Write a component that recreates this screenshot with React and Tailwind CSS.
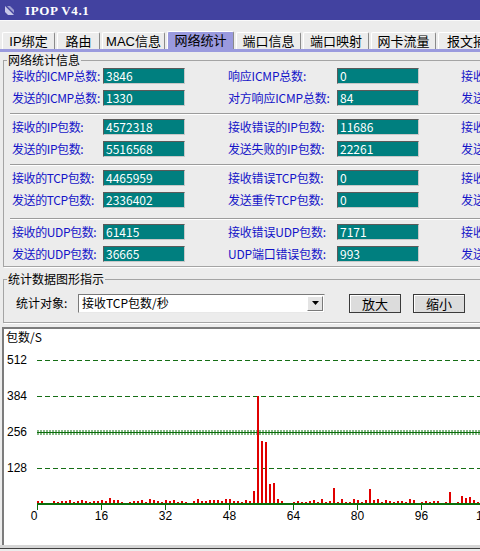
import React from "react";

const tabs = [
  ["IP绑定", 53],
  ["路由", 43],
  ["MAC信息", 63],
  ["网络统计", 67, true],
  ["端口信息", 65],
  ["端口映射", 66],
  ["网卡流量", 65],
  ["报文捕获", 70],
];

// 每组两行：[标签, 值, 中间标签, 值, 右侧标签]
const blocks = [
  [
    ["接收的ICMP总数:", "3846", "响应ICMP总数:", "0", "接收的ICMP错误:"],
    ["发送的ICMP总数:", "1330", "对方响应ICMP总数:", "84", "发送的ICMP错误:"],
  ],
  [
    ["接收的IP包数:", "4572318", "接收错误的IP包数:", "11686", "接收的IP分片:"],
    ["发送的IP包数:", "5516568", "发送失败的IP包数:", "22261", "发送的IP分片:"],
  ],
  [
    ["接收的TCP包数:", "4465959", "接收错误TCP包数:", "0", "接收的TCP连接:"],
    ["发送的TCP包数:", "2336402", "发送重传TCP包数:", "0", "发送的TCP连接:"],
  ],
  [
    ["接收的UDP包数:", "61415", "接收错误UDP包数:", "7171", "接收的UDP端口:"],
    ["发送的UDP包数:", "36665", "UDP端口错误包数:", "993", "发送的UDP端口:"],
  ],
];

const sepMargin = ["mt-[7px]", "mt-[7px]", "mt-[10px]"];

// 柱高 (px)，每 4px 一根
const bars = [
  3, 3, 0, 1, 3, 2, 3, 3, 4, 2, 3, 4, 3, 2, 3, 3, 4, 3, 6, 4, 4, 2, 1, 2, 3, 3,
  4, 2, 5, 4, 3, 2, 4, 3, 4, 2, 3, 2, 1, 3, 5, 3, 3, 4, 4, 4, 3, 5, 5, 3, 3, 2,
  4, 3, 13, 108, 63, 62, 20, 21, 5, 3, 0, 0, 2, 3, 2, 2, 3, 4, 2, 5, 2, 3, 16,
  2, 5, 2, 2, 5, 4, 2, 4, 15, 4, 5, 2, 4, 3, 2, 3, 3, 2, 5, 4, 1, 2, 3, 2, 3, 3,
  0, 2, 12, 1, 2, 8, 6, 7, 4, 2,
];

function Val({ v }) {
  return (
    <div className="w-[82px] h-[16px] shrink-0 bg-[#007f7f] text-white text-[12px] leading-[14px] pl-[2px] border border-t-[#5a5a5a] border-l-[#5a5a5a] border-r-[#c8c8c8] border-b-[#c8c8c8]">
      {v}
    </div>
  );
}

function StatRow({ r, first }) {
  return (
    <div className={`flex items-center h-[16px] text-[12px] text-[#1414c8] whitespace-nowrap ${first ? "" : "mt-[6px]"}`}>
      <span className="ml-[8px] w-[91px] shrink-0 tracking-[-0.4px]">{r[0]}</span>
      <Val v={r[1]} />
      <span className="ml-[43px] w-[109px] shrink-0 tracking-[-0.2px]">{r[2]}</span>
      <Val v={r[3]} />
      <span className="ml-[42px] shrink-0">{r[4]}</span>
    </div>
  );
}

function Chart() {
  const grid = [
    [512, 360],
    [384, 396],
    [256, 432],
    [128, 468],
  ];
  const ticks = [0, 16, 32, 48, 64, 80, 96, 112];
  return (
    <svg width="476" height="216" viewBox="4 329 476 216" className="block">
      <text x="6" y="342" fontSize="12" fontFamily='"Noto Sans CJK SC", sans-serif' fill="#000">
        包数/S
      </text>
      {grid.map(([v, y]) => (
        <g key={v}>
          <text x="7" y={y + 4} fontSize="12" fontFamily='"Liberation Sans", sans-serif' fill="#000">
            {v}
          </text>
          {v === 256 ? (
            <>
              <line x1="37" x2="480" y1={y + 0.5} y2={y + 0.5} stroke="#0b6e0b" strokeWidth="1" />
              <line x1="37.5" x2="480" y1={y + 0.5} y2={y + 0.5} stroke="#0b6e0b" strokeWidth="5" strokeDasharray="1 2" />
            </>
          ) : (
            <line x1="37" x2="480" y1={y + 0.5} y2={y + 0.5} stroke="#166e16" strokeWidth="1" strokeDasharray="5 3" />
          )}
        </g>
      ))}
      {bars.map((h, i) =>
        h > 0 ? <rect key={i} x={37 + i * 4} y={504 - h} width="2" height={h} fill="#e00000" /> : null
      )}
      <line x1="37" x2="480" y1="504" y2="504" stroke="#0b6e0b" strokeWidth="2" />
      {ticks.map((t) => (
        <g key={t}>
          <line x1={37.5 + t * 4} x2={37.5 + t * 4} y1="504" y2="510" stroke="#0b6e0b" strokeWidth="1" />
          <text
            x={t === 0 ? 34 : 37.5 + t * 4}
            y="520"
            fontSize="12"
            textAnchor="middle"
            fontFamily='"Liberation Sans", sans-serif'
            fill="#000"
          >
            {t}
          </text>
        </g>
      ))}
    </svg>
  );
}

export default function App() {
  return (
    <div className="w-[480px] h-[551px] overflow-hidden bg-[#ececec] font-['Noto_Sans_CJK_SC','Liberation_Sans',sans-serif] text-[12px] leading-none text-black">
      {/* 标题栏 */}
      <div className="h-[20px] bg-[#4242a0] flex items-center pl-[5px] gap-[11px]">
        <svg width="9" height="9" viewBox="0 0 9 9">
          <polygon points="0,0 9,9 3,9 0,6" fill="#c8c8e8" />
          <polygon points="2,0 5,0 9,4 9,7" fill="#9c9cd0" />
        </svg>
        <span className="text-white font-bold font-['Liberation_Serif',serif] text-[13px] tracking-[0.6px] whitespace-pre">
          IPOP V4.1
        </span>
      </div>
      <div className="h-[12px] border-t border-[#fafafa]" />

      {/* 选项卡 */}
      <div className="flex items-end gap-[2px] pl-[2px] h-[17px] whitespace-nowrap font-['Liberation_Sans','Noto_Sans_CJK_SC',sans-serif]">
        {tabs.map(([t, w, sel]) => (
          <div
            key={t}
            style={{ width: w }}
            className={`shrink-0 flex items-center justify-center text-[13px] rounded-t-[2px] border-t border-l border-r border-t-white border-l-white border-r-[#8a8a8a] ${
              sel ? "h-[18px] bg-[#9a9ade]" : "h-[17px] bg-[#ececec]"
            }`}
          >
            {t}
          </div>
        ))}
      </div>
      <div className="h-[3px] bg-[#9a9ade]" />
      <div className="h-[1px]" />

      {/* 网络统计信息 */}
      <fieldset className="ml-[3px] w-[620px] border border-[#a4a4a4] shadow-[1px_1px_0_#ffffff] pt-[1px] pb-[4px]">
        <legend className="ml-[3px] px-[1px] text-[12px] leading-[14px]">网络统计信息</legend>
        {blocks.map((b, bi) => (
          <div key={bi}>
            <StatRow r={b[0]} first />
            <StatRow r={b[1]} />
            {bi < blocks.length - 1 && (
              <div className={`${sepMargin[bi]} mb-[4px] ml-[6px] border-t border-[#9c9c9c] border-b border-b-white`} />
            )}
          </div>
        ))}
      </fieldset>

      {/* 统计数据图形指示 */}
      <fieldset className="mt-[5px] ml-[3px] w-[620px] border border-[#a4a4a4] shadow-[1px_1px_0_#ffffff] pt-[7px] pb-[9px]">
        <legend className="ml-[3px] px-[1px] text-[12px] leading-[14px]">统计数据图形指示</legend>
        <div className="flex items-center h-[20px] whitespace-nowrap">
          <span className="ml-[12px] w-[62px] shrink-0 text-[12px]">统计对象:</span>
          <div className="w-[247px] h-[19px] shrink-0 bg-white border border-t-[#7a7a7a] border-l-[#7a7a7a] border-r-[#e8e8e8] border-b-[#e8e8e8] flex items-center justify-between pl-[3px] pr-[1px]">
            <span className="text-[12px]">接收TCP包数/秒</span>
            <div className="w-[16px] h-[15px] bg-[#e4e4e4] border border-t-white border-l-white border-r-[#7a7a7a] border-b-[#7a7a7a] flex items-center justify-center">
              <svg width="7" height="4" viewBox="0 0 7 4">
                <polygon points="0,0 7,0 3.5,4" fill="#000" />
              </svg>
            </div>
          </div>
          <button className="ml-[24px] w-[52px] h-[19px] shrink-0 bg-[#dcdcdc] border border-[#3a3a3a] shadow-[inset_1px_1px_0_#ffffff] text-[13px] leading-none">
            放大
          </button>
          <button className="ml-[12px] w-[52px] h-[19px] shrink-0 bg-[#dcdcdc] border border-[#3a3a3a] shadow-[inset_1px_1px_0_#ffffff] text-[13px] leading-none">
            缩小
          </button>
        </div>
      </fieldset>

      {/* 图表 */}
      <div className="mt-[4px] ml-[2px] border-l-2 border-t-2 border-[#7c7c7c] bg-white h-[218px]">
        <Chart />
      </div>
      <div className="h-[3px] bg-[#d6d6d6]" />
      <div className="h-[1px] bg-[#404040]" />
    </div>
  );
}
